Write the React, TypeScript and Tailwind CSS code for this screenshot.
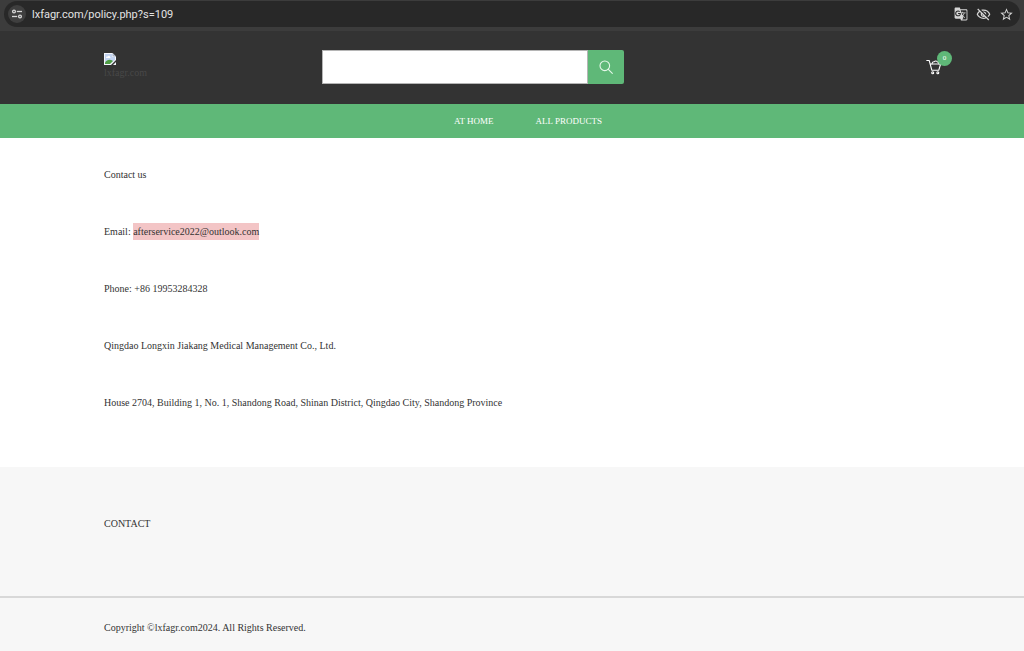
import { useState } from "react";
import { MdGTranslate, MdOutlineVisibilityOff, MdStarBorder } from "react-icons/md";

const policyLines = [
  "Phone: +86 19953284328",
  "Qingdao Longxin Jiakang Medical Management Co., Ltd.",
  "House 2704, Building 1, No. 1, Shandong Road, Shinan District, Qingdao City, Shandong Province",
];

function TuneIcon() {
  return (
    <svg viewBox="0 0 12 12" className="w-3 h-3" fill="none" stroke="#d6d6d6" strokeWidth="1.3">
      <circle cx="3" cy="3.500" r="1.400" />
      <path d="M5.800 3.500H11" />
      <circle cx="9" cy="8.500" r="1.400" />
      <path d="M1 8.500H6.200" />
    </svg>
  );
}

function BrokenImage() {
  return (
    <svg viewBox="0 0 12 12" className="w-3 h-3">
      <path d="M0 0h8.500L12 3.500V7L7 12H0z" fill="#f4f7fc" />
      <path d="M1 1h7v3h3v3L5 11H1z" fill="#c3d4f2" />
      <path d="M2 4.600c0-1 1-1.400 1.700-1 .5-1.200 2.300-.9 2.300.4.700 0 .8 1 0 1H2.500c-.3 0-.5-.2-.5-.4z" fill="#fff" />
      <path d="M1 11V9.500C3 6.500 6 6 9 8l-3 3z" fill="#4f9d45" />
      <path d="M12 9v3H9z" fill="#f4f7fc" />
      <path d="M8.500 0v3.500H12z" fill="#a9b4c6" />
    </svg>
  );
}

function CartIcon() {
  return (
    <svg viewBox="0 0 16 16" className="w-4 h-4" fill="none" stroke="#fff" strokeWidth="1.100" strokeLinecap="round" strokeLinejoin="round">
      <path d="M.8 1.500h2.400l2.600 9.700h7L14.600 5H4.300" />
      <path d="M6 5c.2-1.600 1.100-2.400 2.200-2.200C9 1.600 11 1.800 11.500 3c1 0 1.500.8 1.500 2" />
      <circle cx="6.700" cy="13.800" r="1" />
      <circle cx="11.800" cy="13.800" r="1" />
    </svg>
  );
}

function BrowserBar() {
  return (
    <div className="bg-[#3c3c3c] px-1 pt-px pb-1">
      <div className="flex items-center h-[26px] rounded-full bg-[#282828] pl-1 pr-1.5 text-[#d6d6d6]">
        <button aria-label="Site information" className="w-[18px] h-[18px] rounded-full bg-[#3f3f3f] flex items-center justify-center">
          <TuneIcon />
        </button>
        <input aria-label="Address" defaultValue="lxfagr.com/policy.php?s=109" className="flex-1 min-w-0 ml-1.5 bg-transparent font-[Roboto,sans-serif] text-[11px] text-[#e3e3e3] outline-none" />
        <div className="flex items-center gap-2">
          <button aria-label="Translate this page"><MdGTranslate className="w-[14px] h-[14px]" /></button>
          <button aria-label="Third-party cookies blocked"><MdOutlineVisibilityOff className="w-[15px] h-[15px]" /></button>
          <button aria-label="Bookmark this page"><MdStarBorder className="w-[15px] h-[15px]" /></button>
        </div>
      </div>
    </div>
  );
}

export default function App() {
  const [query, setQuery] = useState("");

  return (
    <div className="min-h-screen flex flex-col bg-white font-['Liberation_Serif',serif] text-[10px] leading-[17px] text-[#333]">
      <BrowserBar />

      <header className="bg-[#333] h-[73px] pl-[104px] pr-[72px] pb-px flex items-center">
        <a href="#" className="w-[218px] shrink-0 text-[#484848] leading-3">
          <BrokenImage />
          <span className="block mt-0.5 mb-0.5">lxfagr.com</span>
        </a>
        <form onSubmit={e => e.preventDefault()} className="flex w-[302px] h-[34px]">
          <input
            type="search"
            aria-label="Search"
            value={query}
            onChange={e => setQuery(e.target.value)}
            className="flex-1 min-w-0 bg-white border border-[#b5b5b5] px-2 outline-none"
          />
          <button aria-label="Submit search" className="w-9 bg-[#5fb878] rounded-r-xs flex items-center justify-center">
            <svg viewBox="0 0 14 14" className="w-3.5 h-3.5" fill="none" stroke="#e6f7ea" strokeWidth="1.100" strokeLinecap="round">
              <circle cx="5.800" cy="5.800" r="4.800" />
              <path d="M9.300 9.300l4 4" />
            </svg>
          </button>
        </form>
        <a href="#" aria-label="Cart" className="relative ml-auto w-[26px]">
          <CartIcon />
          <span className="absolute right-0 -top-2 w-[15px] h-[15px] rounded-full bg-[#5fb878] text-white text-[7px] leading-[15px] text-center">0</span>
        </a>
      </header>

      <nav className="bg-[#5fb878] h-[34px] pl-[104px] pr-[72px] flex items-center justify-center gap-10 text-white text-[9px]">
        <a href="#" className="px-px">AT HOME</a>
        <a href="#" className="px-px">ALL PRODUCTS</a>
      </nav>

      <main className="pl-[104px] pr-[72px] pt-7 pb-14 flex flex-col gap-10">
        <p>Contact us</p>
        <p>
          Email: <span className="inline-block bg-[#f3c5c6]">afterservice2022@outlook.com</span>
        </p>
        {policyLines.map(line => (
          <p key={line}>{line}</p>
        ))}
      </main>

      <footer className="flex-1 bg-[#f7f7f7]">
        <div className="pl-[104px] pr-[72px] pt-12 pb-16 border-b-2 border-[#d8d8d8]">
          <h2>CONTACT</h2>
        </div>
        <p className="pl-[104px] pr-[72px] pt-[21px]">Copyright ©lxfagr.com2024. All Rights Reserved.</p>
      </footer>
    </div>
  );
}
